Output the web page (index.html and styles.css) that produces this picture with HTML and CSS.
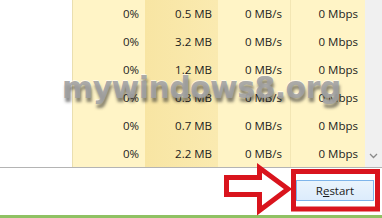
FILE: index.html
```html
<!DOCTYPE html>
<html>
<head>
<meta charset="utf-8">
<link rel="stylesheet" href="styles.css">
</head>
<body>
<div class="window">
  <div class="table">
    <div class="grid">
      <div class="cell blank"></div><div class="cell cpu">0%</div><div class="cell mem">0.5 MB</div><div class="cell disk">0 MB/s</div><div class="cell net">0 Mbps</div>
      <div class="cell blank"></div><div class="cell cpu">0%</div><div class="cell mem">3.2 MB</div><div class="cell disk">0 MB/s</div><div class="cell net">0 Mbps</div>
      <div class="cell blank"></div><div class="cell cpu">0%</div><div class="cell mem">1.2 MB</div><div class="cell disk">0 MB/s</div><div class="cell net">0 Mbps</div>
      <div class="cell blank"></div><div class="cell cpu">0%</div><div class="cell mem">0.3 MB</div><div class="cell disk">0 MB/s</div><div class="cell net">0 Mbps</div>
      <div class="cell blank"></div><div class="cell cpu">0%</div><div class="cell mem">0.7 MB</div><div class="cell disk">0 MB/s</div><div class="cell net">0 Mbps</div>
      <div class="cell blank"></div><div class="cell cpu">0%</div><div class="cell mem">2.2 MB</div><div class="cell disk">0 MB/s</div><div class="cell net">0 Mbps</div>
    </div>
    <div class="scrollbar">
      <svg class="chev" width="17" height="10" viewBox="0 0 17 10"><polyline points="5,3 8.5,6.5 12,3" fill="none" stroke="#8a8a8a" stroke-width="1.3"/></svg>
    </div>
  </div>
  <div class="footer">
    <button class="btn">R<u>e</u>start</button>
  </div>
  <div class="greenline"></div>
  <div class="watermark">mywindows8.org</div>
  <svg class="annot" width="382" height="218" viewBox="0 0 382 218">
    <polygon points="226.5,177.5 259.5,177.5 259.5,168 288,189 259.5,210.5 259.5,194.5 226.5,194.5" fill="#ffffff" stroke="#d9141d" stroke-width="5" stroke-linejoin="miter"/>
    <rect x="293.5" y="171.5" width="84" height="37.5" fill="none" stroke="#d9141d" stroke-width="5"/>
  </svg>
</div>
</body>
</html>
```

FILE: styles.css
```css
html, body {
  margin: 0;
  padding: 0;
}
body {
  width: 382px;
  height: 218px;
  overflow: hidden;
  background: #ffffff;
  font-family: "Open Sans", "Noto Sans", sans-serif;
  font-size: 11.5px;
  color: #1c1c1c;
}
.window {
  position: relative;
  width: 382px;
  height: 218px;
  display: flex;
  flex-direction: column;
}
.table {
  height: 167px;
  display: flex;
  border-bottom: 1px solid #b4b4b4;
  overflow: hidden;
}
.grid {
  flex: 1;
  display: grid;
  grid-template-columns: 72px 73px 73px 73px 74px;
  grid-template-rows: repeat(6, 28px);
  align-content: end;
}
.cell {
  text-align: right;
  line-height: 26px;
  padding-top: 2px;
  padding-right: 6px;
  white-space: nowrap;
}
.blank {
  background: #ffffff;
  padding: 0;
}
.cpu {
  background: #fff4c6;
  border-left: 1px solid #eadfb0;
}
.mem {
  background: linear-gradient(to right, #f8e5a3, #faeab0);
}
.disk {
  background: #fff4c6;
  border-right: 1px solid #f3e6b4;
  padding-right: 8px;
}
.net {
  background: #fff4c6;
  padding-right: 7px;
}
.scrollbar {
  width: 17px;
  background: #f0f0f0;
  display: flex;
  flex-direction: column;
  justify-content: flex-end;
  padding-bottom: 6px;
  box-sizing: border-box;
}
.chev {
  display: block;
}
.footer {
  flex: 1;
  display: flex;
  justify-content: flex-end;
  align-items: flex-start;
  padding: 12px 8px 0 0;
}
.btn {
  width: 78px;
  height: 21px;
  margin: 0;
  padding: 0;
  font-family: "Open Sans", "Noto Sans", sans-serif;
  font-size: 11.5px;
  color: #1a1a1a;
  background: linear-gradient(#eaf4fc, #dcecfc);
  border: 1px solid #7eb4ea;
  border-radius: 0;
  line-height: 19px;
}
.greenline {
  height: 3px;
  background: #8fc163;
}
.watermark {
  position: absolute;
  left: 62px;
  top: 70px;
  font-family: "DejaVu Sans", sans-serif;
  font-weight: bold;
  font-size: 30px;
  letter-spacing: -0.6px;
  color: rgba(160, 160, 160, 0.9);
  text-shadow: 1px 4px 3px rgba(40, 40, 40, 0.55), 0 -1px 0 rgba(255,255,255,0.6);
  white-space: nowrap;
}
.annot {
  position: absolute;
  left: 0;
  top: 0;
  pointer-events: none;
}
```
